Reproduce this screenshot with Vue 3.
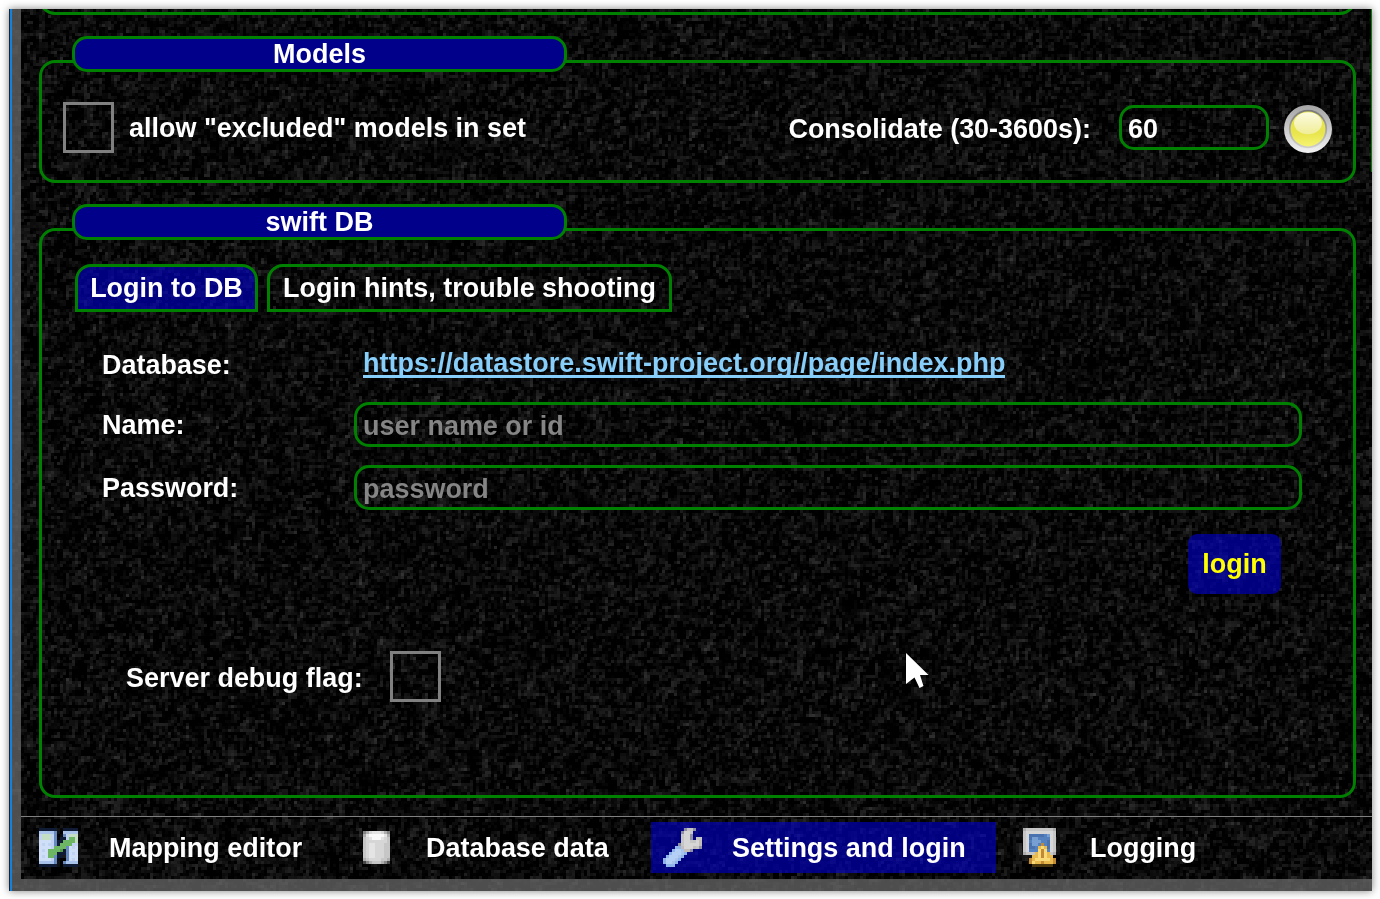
<script setup>
import { onMounted, ref } from 'vue'

const grain = ref(null)

const palette = {
  n: '#101c36', d: '#6689bf', b: '#a9c3ea', l: '#c0d3f2', w: '#d0dff8',
  e: '#c3dec3', g: '#6db663', h: '#559b4b',
  k: '#484848', 1: '#858585', 2: '#adadad', 3: '#c6c6c6', 4: '#d6d6d6', 5: '#e4e4e4', 6: '#fafafa',
  m: '#8e8ea4', i: '#8fb4ea', j: '#b4d0f7',
  p: '#4a72ae', q: '#5681bf', r: '#789fd1',
  v: '#46350f', x: '#c38a35', y: '#e8b94d', z: '#f8da78', a: '#c2bcba',
}

// Low-resolution toolbar icons, one character per 3px cell.
const pages = [
  {
    id: 'mapping', label: 'Mapping editor', art: [
      'nnnnnn..nnnnn',
      'bbbbbd..bbbbb',
      'leeeld..dleee',
      'leeeld.nnlgge',
      'wwwwldnngggge',
      'wlwlldnggggll',
      'wwwwlggggdwlw',
      'wlwgggghndwww',
      'wwwgggnnndwlw',
      'wlwggdnn.dwww',
      'wwwwld...dwlw',
      'bbbbbd..dbbbb',
      'nnnnnn..nnnnn',
    ],
  },
  {
    id: 'database', label: 'Database data', art: [
      '124555421',
      '256666652',
      '345666543',
      '344444443',
      '345544433',
      '345544433',
      '345544433',
      '345544433',
      '345544433',
      '234444332',
      'k1233321k',
    ],
  },
  {
    id: 'settings', label: 'Settings and login', art: [
      '.......m33m..',
      '......m443...',
      '......344m...',
      '......344m.33',
      '......344334a',
      '.....m344444a',
      '....iia444a3m',
      '...ijjbaam...',
      '..ijjjbi.....',
      '.ijjjbi......',
      'ijjjbi.......',
      'ijjbi........',
      '.iii.........',
    ],
  },
  {
    id: 'logging', label: 'Logging', art: [
      '23333333332',
      '34444444443',
      '34pppppqr43',
      '34prrqqqq43',
      '34qrrrqqp43',
      '34prrqxqp43',
      '34ppqyzyp43',
      '34qqqzxzq43',
      '2333yzxzy32',
      '...yyzxzyy.',
      '..xyzzzzzyx',
      '..xzyyxyyyx',
      '...vvvvvvv.',
    ],
  },
].map((p) => ({
  ...p,
  cells: p.art.flatMap((row, y) =>
    [...row].map((ch, x) => ({ x, y, fill: palette[ch] })).filter((c) => c.fill)),
}))

// Seeded grain texture, one canvas pixel per 3px cell.
onMounted(() => {
  const c = grain.value
  const w = c.width
  const ctx = c.getContext('2d')
  const img = ctx.createImageData(w, c.height)
  let s = 20177
  const rnd = () => {
    s = (s + 0x6d2b79f5) | 0
    let t = Math.imul(s ^ (s >>> 15), 1 | s)
    t = (t + Math.imul(t ^ (t >>> 7), 61 | t)) ^ t
    return ((t ^ (t >>> 14)) >>> 0) / 4294967296
  }
  const noise = []
  for (let i = 0; i < w * c.height; i++) {
    noise[i] = (rnd() + rnd() + rnd() - 1.5) * 28
    const v = Math.max(0, 8 + noise[i] * 0.8 + (noise[i - 1] || 0) * 0.35 + (noise[i - w] || 0) * 0.35)
    img.data[i * 4] = img.data[i * 4 + 1] = img.data[i * 4 + 2] = v
    img.data[i * 4 + 3] = 255
  }
  ctx.putImageData(img, 0, 0)
})
</script>

<template>
  <div class="window">
    <canvas ref="grain" class="grain" width="455" height="294"></canvas>
    <div class="edge"></div>
    <div class="body">
      <main class="content">
        <section class="panel previous"></section>

        <section class="panel models">
          <h2>Models</h2>
          <div class="row">
            <span class="check"></span>
            <span class="t allow">allow "excluded" models in set</span>
            <span class="t consolidate">Consolidate (30-3600s):</span>
            <span class="field short">60</span>
            <svg class="led" width="48" height="48" viewBox="0 0 48 48">
              <defs>
                <linearGradient id="ring" x1="0" y1="0" x2="0" y2="1"><stop offset="0" stop-color="#a4a4a4" /><stop offset="1" stop-color="#f2f2f2" /></linearGradient>
                <linearGradient id="inner" x1="0" y1="0" x2="0" y2="1"><stop offset="0" stop-color="#777" /><stop offset="1" stop-color="#d0d0d0" /></linearGradient>
                <linearGradient id="lamp" x1="0" y1="0" x2="0" y2="1"><stop offset="0" stop-color="#e8e44a" /><stop offset=".6" stop-color="#e8e44c" /><stop offset="1" stop-color="#f6f470" /></linearGradient>
                <linearGradient id="gloss" x1="0" y1="0" x2="0" y2="1"><stop offset="0" stop-color="#fcfbe0" /><stop offset="1" stop-color="#f0ed96" /></linearGradient>
              </defs>
              <circle cx="24" cy="24" r="24" fill="url(#ring)" />
              <circle cx="24" cy="24" r="19.2" fill="url(#inner)" />
              <circle cx="24" cy="24" r="17.4" fill="url(#lamp)" />
              <ellipse cx="24" cy="18.3" rx="14" ry="11" fill="url(#gloss)" />
            </svg>
          </div>
        </section>

        <section class="panel db">
          <h2>swift DB</h2>
          <nav class="tabs">
            <span class="tab active">Login to DB</span>
            <span class="tab">Login hints, trouble shooting</span>
          </nav>
          <div class="form">
            <span class="t database-label">Database:</span>
            <span class="link">https://datastore.swift-project.org//page/index.php</span>
            <span class="t">Name:</span>
            <span class="field hint">user name or id</span>
            <span class="t">Password:</span>
            <span class="field hint">password</span>
          </div>
          <div class="actions"><button class="login">login</button></div>
          <div class="debug">
            <span class="t">Server debug flag:</span>
            <span class="check"></span>
          </div>
        </section>
      </main>

      <footer class="pages">
        <div v-for="p in pages" :key="p.id" class="page" :class="p.id">
          <svg class="icon" width="42" height="42" viewBox="0 0 14 14" shape-rendering="crispEdges">
            <rect v-for="c in p.cells" :key="c.x + '-' + c.y" :x="c.x" :y="c.y" width="1" height="1" :fill="c.fill" />
          </svg>
          <span class="t">{{ p.label }}</span>
        </div>
      </footer>
    </div>
    <div class="accent"></div>
    <svg class="cursor" width="24" height="36" viewBox="0 0 24 36"><path d="M0 0L22.500 22H14L17.500 33L13.500 35L8.500 24.500L0 31Z" fill="#fff" /></svg>
  </div>
</template>

<style>
body { background: #fff; }
</style>

<style scoped>
.window { position: relative; box-sizing: border-box; width: 1363px; height: 882px; margin: 9px 8px 8px 9px; display: flex; background: #080808; box-shadow: 0 0 8px rgba(0, 0, 0, .5); color: #fff; font: bold 26.96px/32px "Liberation Sans", Arial, sans-serif; white-space: nowrap; }
.grain { position: absolute; left: 0; top: 0; width: 1363px; height: 882px; image-rendering: pixelated; }
.edge { position: relative; box-sizing: border-box; width: 12px; border-left: 1px solid #20242a; background: linear-gradient(90deg, #1481dc 2px, rgba(105, 105, 105, .74) 2px); }
.body { position: relative; box-sizing: border-box; width: 1351px; height: 882px; border-bottom: 12px solid rgba(105, 105, 105, .74); display: flex; flex-direction: column; }
.content { height: 807px; padding: 0 16px 0 18px; overflow: hidden; box-sizing: border-box; }
.panel { box-sizing: border-box; border: 3px solid #008000; border-radius: 16px; }
.previous { height: 46px; margin-top: -40px; }
.models { height: 123px; margin-top: 45px; }
.db { height: 570px; margin-top: 45px; }
h2 { box-sizing: border-box; width: 495px; height: 36px; margin: -27px 0 0 30px; border: 3px solid #008000; border-radius: 15px; background: #00008b; font-size: 26.96px; line-height: 30px; text-align: center; }
.row { display: flex; align-items: center; margin: 30px 21px 0 21px; height: 51px; }
.check { box-sizing: border-box; width: 51px; height: 51px; border: 3px solid #808080; flex: none; }
.allow { margin-left: 15px; }
.consolidate { margin: 2px 28px 0 auto; }
.field { box-sizing: border-box; height: 45px; border: 3px solid #008000; border-radius: 15px; padding: 0 6px; line-height: 42px; }
.short { width: 150px; margin-right: 15px; }
.led { display: block; flex: none; margin-top: 2px; }
.tabs { display: flex; gap: 9px; margin: 24px 0 0 33px; }
.tab { box-sizing: border-box; width: 405px; height: 48px; border: 3px solid #008000; border-radius: 16px 16px 0 0; text-align: center; line-height: 42px; }
.tab.active { width: 183px; background: rgba(0, 0, 212, .6); }
.form { display: grid; grid-template-columns: 252px 948px; grid-template-rows: 45px 45px 45px; row-gap: 18px; align-items: center; margin: 27px 0 0 60px; }
.database-label { padding-top: 6px; }
.link { justify-self: start; align-self: start; margin: 12px 0 0 9px; height: 27px; box-sizing: border-box; line-height: 24px; border-bottom: 3px solid #87cefa; color: #87cefa; }
.hint { color: #858585; }
.actions { display: flex; justify-content: flex-end; margin: 24px 72px 0 0; }
.login { width: 93px; height: 60px; border: 0; padding: 0; border-radius: 9px; background: rgba(0, 0, 212, .6); color: #ff0; font: inherit; }
.debug { display: flex; align-items: center; gap: 28px; margin: 57px 0 0 84px; }
.debug .t { width: 236px; margin-top: 2px; }
.pages { box-sizing: border-box; height: 63px; border-top: 1px solid #808080; display: flex; padding-top: 5px; }
.page { box-sizing: border-box; height: 51px; display: flex; align-items: center; }
.icon { flex: none; display: block; margin-top: 3px; }
.mapping { width: 321px; padding-left: 18px; }
.mapping .t { margin-left: 28px; }
.database { width: 309px; padding-left: 21px; }
.database .icon { margin-top: 9px; }
.database .t { margin-left: 21px; }
.settings { width: 345px; padding-left: 12px; background: rgba(0, 0, 212, .6); }
.settings .t { margin-left: 27px; }
.logging { padding-left: 27px; }
.logging .t { margin-left: 25px; }
.accent { position: absolute; right: 0; top: 0; width: 1px; height: 163px; background: #008000; }
.cursor { position: absolute; left: 897px; top: 644px; }
</style>
